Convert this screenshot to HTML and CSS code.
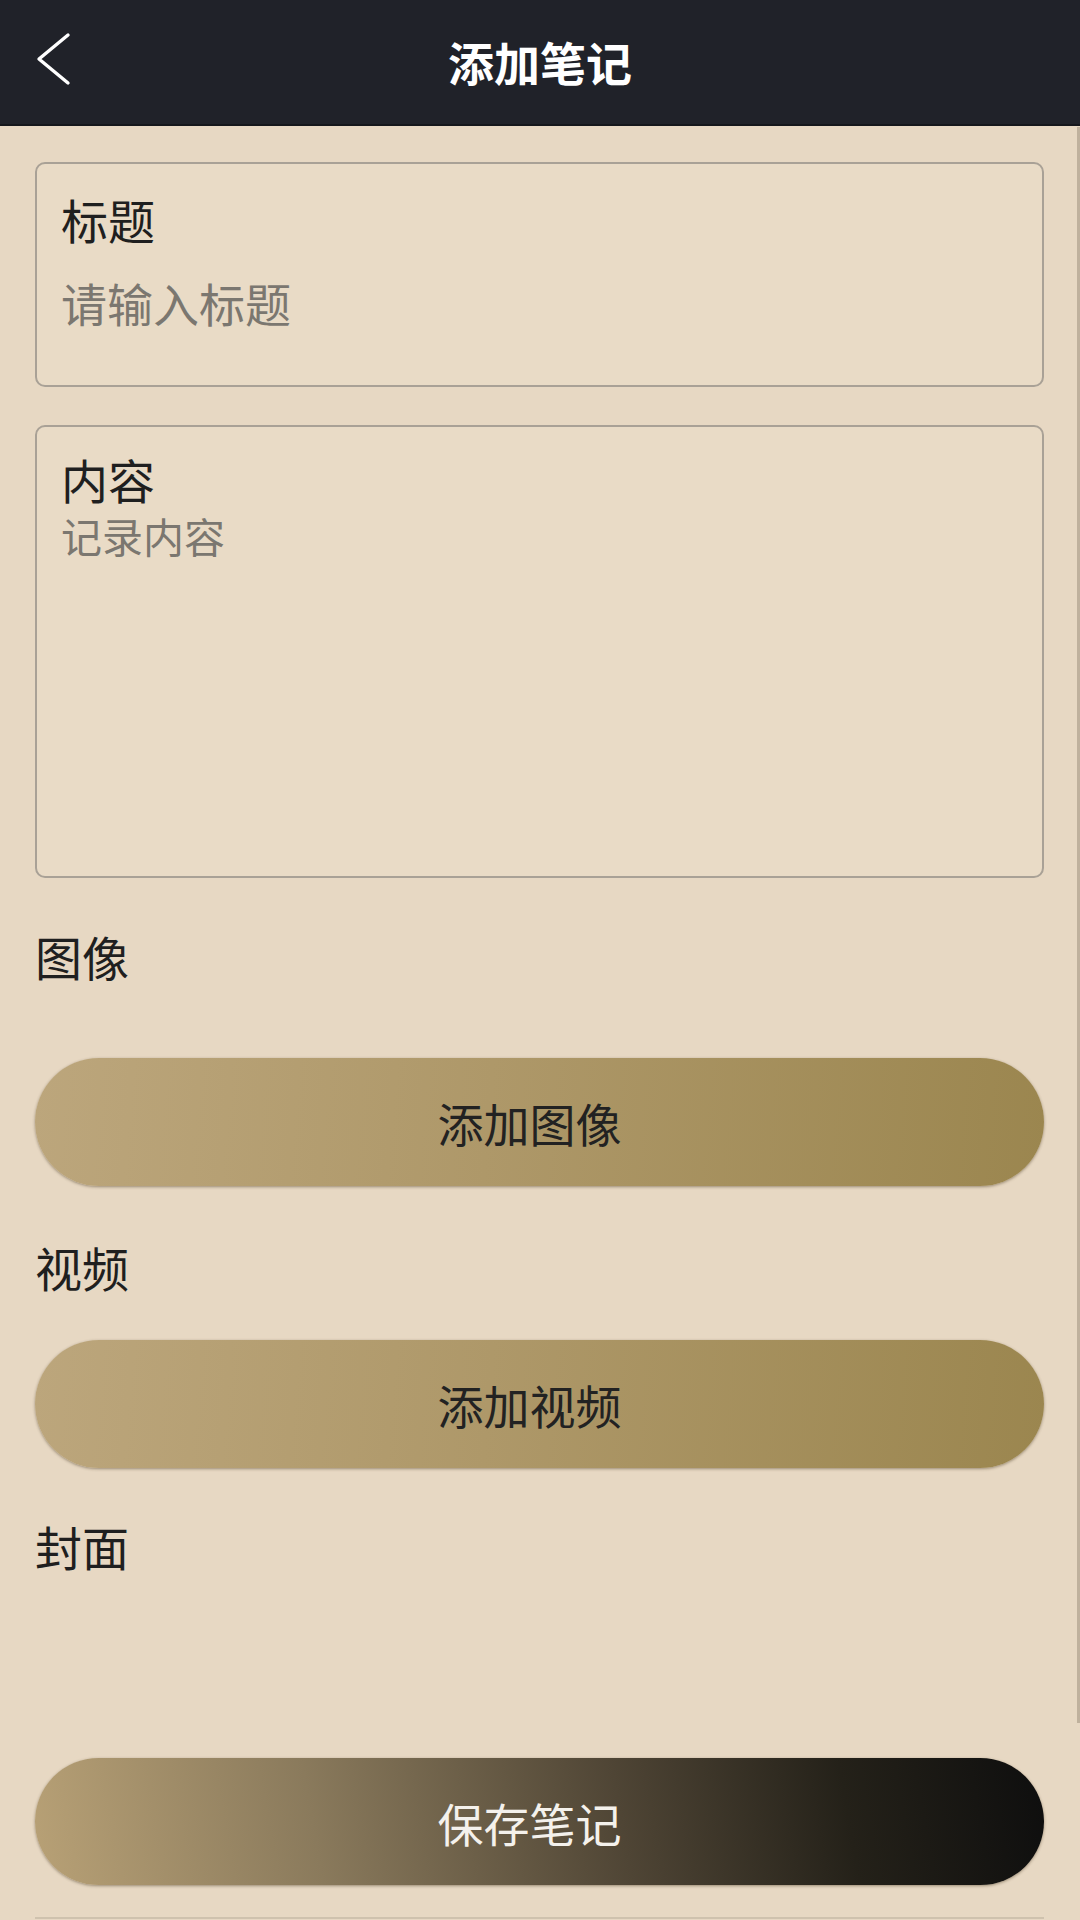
FILE: index.html
```html
<!DOCTYPE html>
<html lang="zh-CN">
<head>
<meta charset="utf-8">
<title>添加笔记</title>
<link rel="stylesheet" href="styles.css">
</head>
<body>
<div class="app">
  <header class="topbar">
    <div class="back">
      <svg width="90" height="124" viewBox="0 0 90 124" aria-hidden="true">
        <polyline points="68,35 39,59 68,83" fill="none" stroke="#ffffff" stroke-width="3.4" stroke-linecap="round" stroke-linejoin="round"/>
      </svg>
    </div>
    <h1 class="title">添加笔记</h1>
    <div class="spacer"></div>
  </header>

  <main class="form">
    <div class="field field-title">
      <div class="field-label">标题</div>
      <div class="field-input">请输入标题</div>
    </div>

    <div class="field field-content">
      <div class="field-label">内容</div>
      <div class="field-textarea">记录内容</div>
    </div>

    <div class="section-label label-image">图像</div>
    <button class="btn btn-gold btn-image">添加图像</button>

    <div class="section-label label-video">视频</div>
    <button class="btn btn-gold btn-video">添加视频</button>

    <div class="section-label label-cover">封面</div>
    <div class="cover-area"></div>

    <button class="btn btn-save">保存笔记</button>

    <div class="after"></div>
  </main>

  <div class="scrollbar"></div>
</div>
</body>
</html>
```

FILE: styles.css
```css
* { box-sizing: border-box; }

html, body {
  margin: 0;
  padding: 0;
}

body {
  width: 1080px;
  height: 1920px;
  overflow: hidden;
  background: #e7d8c3;
  font-family: "Noto Sans CJK SC", "Noto Sans", sans-serif;
  color: #222222;
}

.app {
  position: relative;
  width: 1080px;
  height: 1920px;
  overflow: hidden;
}

.topbar {
  height: 126px;
  background: #202229;
  border-bottom: 2px solid #15171c;
  display: grid;
  grid-template-columns: 1fr auto 1fr;
  align-items: center;
}

.back {
  display: flex;
  align-items: flex-start;
  height: 100%;
}

.back svg { display: block; }

.title {
  margin: 0;
  font-size: 46px;
  font-weight: 700;
  color: #ffffff;
  line-height: 1;
  margin-top: -2px;
}

.form {
  padding: 0 36px 0 35px;
  display: flex;
  flex-direction: column;
}

.field {
  border: 2px solid #a9a196;
  border-radius: 10px;
  background: #e9dbc6;
  padding-left: 24px;
  padding-right: 24px;
}

.field-title {
  margin-top: 36px;
  height: 225px;
  padding-top: 31px;
}

.field-content {
  margin-top: 38px;
  height: 453px;
  padding-top: 28px;
}

.field-label {
  font-size: 47px;
  line-height: 1;
  color: #1f1f1f;
}

.field-input {
  margin-top: 37px;
  font-size: 46px;
  line-height: 1;
  color: #7b7770;
}

.field-textarea {
  margin-top: 13px;
  font-size: 41px;
  line-height: 1;
  color: #7b7770;
}

.section-label {
  font-size: 47px;
  line-height: 1;
  color: #1f1f1f;
}

.label-image { margin-top: 54px; }
.label-video { margin-top: 57px; }
.label-cover { margin-top: 54px; }

.btn {
  display: flex;
  align-items: center;
  justify-content: center;
  width: 100%;
  height: 128px;
  border: none;
  border-radius: 64px;
  font-family: "Noto Sans CJK SC", "Noto Sans", sans-serif;
  font-size: 46px;
  line-height: 1;
  padding: 0 20px 0 0;
  box-shadow: 0 1px 3px rgba(60, 45, 20, 0.45);
}

.btn-gold {
  background: linear-gradient(95deg, #bca67c 0%, #ae9869 45%, #9b864f 100%);
  color: #222222;
}

.btn-image { margin-top: 79px; }
.btn-video { margin-top: 50px; }

.cover-area {
  height: 189px;
}

.btn-save {
  height: 127px;
  background: linear-gradient(80deg, #b8a176 0%, #8a7a5c 28%, #4f4535 58%, #242119 80%, #0e0e0e 100%);
  color: #f4f1ec;
}

.after {
  margin-top: 32px;
  border-top: 2px solid #cfc2ae;
  height: 80px;
}

.scrollbar {
  position: absolute;
  right: 0;
  top: 127px;
  width: 3px;
  height: 1596px;
  background: #bfb19d;
}
```
